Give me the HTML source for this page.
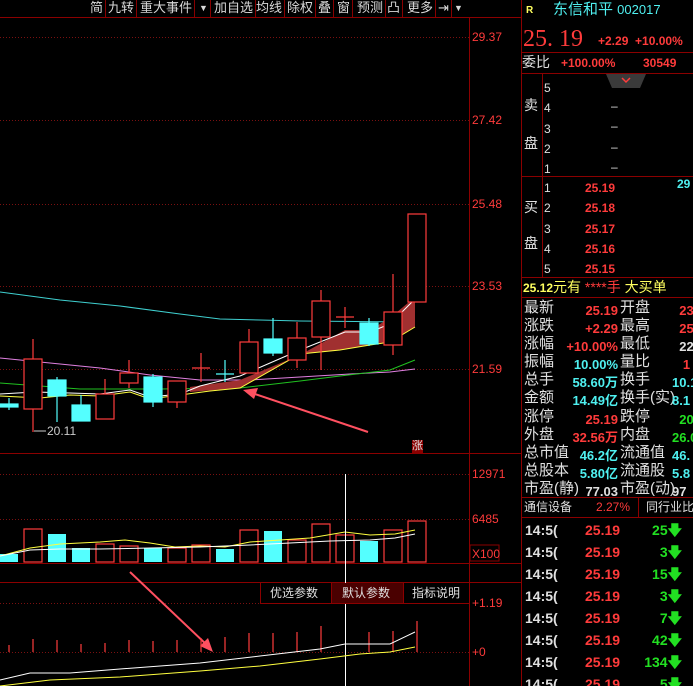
<!DOCTYPE html>
<html><head><meta charset="utf-8"><style>
*{margin:0;padding:0;box-sizing:border-box}
html,body{width:693px;height:686px;background:#000;overflow:hidden}
body{position:relative;font-family:"Liberation Sans","Noto Sans CJK SC",sans-serif;}
.t{position:absolute;white-space:nowrap;line-height:1}
.r{color:#ff3b3b}.c{color:#4ff0f0}.g{color:#22e022}.w{color:#e0e0e0}.y{color:#ffff60}
.tb{position:absolute;top:0;height:17px;font-size:13px;color:#d8d8d8;border-right:1px solid #800;line-height:16px;padding:0 2px}
</style></head><body>
<svg width="693" height="686" style="position:absolute;left:0;top:0">
<g stroke="#8b0000" stroke-width="1" fill="none">
<line x1="0" y1="17.5" x2="521" y2="17.5"/>
<line x1="469.5" y1="17" x2="469.5" y2="686"/>
<line x1="521.5" y1="0" x2="521.5" y2="686"/>
<line x1="0" y1="453.5" x2="521" y2="453.5"/>
<line x1="0" y1="563.5" x2="521" y2="563.5"/>
<line x1="0" y1="582.5" x2="521" y2="582.5"/>
</g>
<g stroke="#7a1010" stroke-dasharray="1,2" stroke-width="1">
<line x1="0" y1="37.5" x2="469" y2="37.5"/>
<line x1="0" y1="120.5" x2="469" y2="120.5"/>
<line x1="0" y1="204.5" x2="469" y2="204.5"/>
<line x1="0" y1="286.5" x2="469" y2="286.5"/>
<line x1="0" y1="369.5" x2="469" y2="369.5"/>
<line x1="0" y1="474.5" x2="469" y2="474.5"/>
<line x1="0" y1="519.5" x2="469" y2="519.5"/>
<line x1="0" y1="652.5" x2="469" y2="652.5"/>
<line x1="0" y1="603.5" x2="469" y2="603.5"/>
</g>
<polyline fill="none" stroke="#3fd0d0" points="0,292 60,300 120,306 180,314 220,319 260,320 300,321 415,322"/>
<polyline fill="none" stroke="#e080e0" points="0,358 50,363 100,368 150,375 200,380 250,380 300,377 350,374 390,372 415,369"/>
<polyline fill="none" stroke="#20c020" points="0,383 40,386 80,389 160,389 240,388 300,381 340,376 390,370 415,360"/>
<path d="M190,387 L240,380 L300,355 L345,330 L370,330 L390,318 L415,297 L415,327 L390,342 L370,345 L340,350 L300,354 L240,388 L190,392Z" fill="#a03030"/>
<polyline fill="none" stroke="#ffff40" points="0,396 40,398 70,395 100,396 130,392 150,399 180,395 210,391 240,388 300,354 340,350 370,345 390,342 415,327"/>
<polyline fill="none" stroke="#ffffff" points="0,394 35,392 70,393 100,394 130,390 150,397 180,394 200,386 240,376 270,363 300,350 345,332 370,332 390,324 415,299"/>
<g stroke="#ff3c3c" fill="#000" stroke-width="1.2">
<line x1="33" y1="339" x2="33" y2="432"/><rect x="24" y="359" width="18" height="50"/>
<line x1="105" y1="379" x2="105" y2="419"/><rect x="96" y="394" width="18" height="25"/>
<line x1="129" y1="360" x2="129" y2="388"/><rect x="120" y="373" width="18" height="10"/>
<line x1="177" y1="381" x2="177" y2="408"/><rect x="168" y="381" width="18" height="21"/>
<line x1="201" y1="353" x2="201" y2="382"/><line x1="192" y1="368" x2="210" y2="368"/>
<line x1="249" y1="329" x2="249" y2="373"/><rect x="240" y="342" width="18" height="31"/>
<line x1="297" y1="322" x2="297" y2="368"/><rect x="288" y="338" width="18" height="22"/>
<line x1="321" y1="290" x2="321" y2="370"/><rect x="312" y="301" width="18" height="36"/>
<line x1="345" y1="307" x2="345" y2="328"/><line x1="336" y1="317" x2="354" y2="317"/>
<line x1="393" y1="274" x2="393" y2="355"/><rect x="384" y="312" width="18" height="33"/>
<rect x="408" y="214" width="18" height="88"/>
</g>
<g stroke="#54ffff" fill="#54ffff" stroke-width="1.2">
<line x1="9" y1="398" x2="9" y2="410"/><rect x="0" y="404" width="18" height="3"/>
<line x1="57" y1="377" x2="57" y2="422"/><rect x="48" y="380" width="18" height="16"/>
<line x1="81" y1="395" x2="81" y2="421"/><rect x="72" y="405" width="18" height="16"/>
<line x1="153" y1="374" x2="153" y2="407"/><rect x="144" y="377" width="18" height="25"/>
<line x1="225" y1="360" x2="225" y2="382"/><line x1="216" y1="374" x2="234" y2="374"/>
<line x1="273" y1="318" x2="273" y2="356"/><rect x="264" y="339" width="18" height="14"/>
<line x1="369" y1="318" x2="369" y2="346"/><rect x="360" y="323" width="18" height="21"/>
</g>
<line x1="34" y1="431" x2="46" y2="431" stroke="#ccc"/>
<line x1="368" y1="432" x2="252" y2="393" stroke="#ff5060" stroke-width="2"/>
<polygon points="243,390 258,388 254,399" fill="#ff5060"/>
<line x1="130" y1="572" x2="208" y2="646" stroke="#ff5060" stroke-width="2"/>
<polygon points="213,652 200,646 208,638" fill="#ff5060"/>
<g fill="#54ffff">
<rect x="0" y="554" width="18" height="8"/><rect x="48" y="534" width="18" height="28"/><rect x="72" y="548" width="18" height="14"/>
<rect x="144" y="548" width="18" height="14"/><rect x="216" y="549" width="18" height="13"/><rect x="264" y="531" width="18" height="31"/><rect x="360" y="541" width="18" height="21"/>
</g>
<g fill="none" stroke="#ff3c3c" stroke-width="1.2">
<rect x="24" y="529" width="18" height="33"/><rect x="96" y="544" width="18" height="18"/><rect x="120" y="546" width="18" height="16"/>
<rect x="168" y="548" width="18" height="14"/><rect x="192" y="545" width="18" height="17"/><rect x="240" y="530" width="18" height="32"/>
<rect x="288" y="540" width="18" height="22"/><rect x="312" y="524" width="18" height="38"/><rect x="336" y="535" width="18" height="27"/>
<rect x="384" y="530" width="18" height="32"/><rect x="408" y="521" width="18" height="41"/>
</g>
<polyline fill="none" stroke="#ffff40" points="0,556 30,548 60,544 100,542 125,540 150,543 175,547 200,546 225,547 250,542 280,540 310,538 345,532 370,535 395,534 415,530"/>
<polyline fill="none" stroke="#fff" points="0,556 30,550 60,549 100,549 150,548 200,547 250,545 290,543 330,541 370,540 395,538 415,534"/>
<line x1="345.5" y1="474" x2="345.5" y2="686" stroke="#fff"/>
<g stroke="#ff3c3c" stroke-width="1.2">
<line x1="9" y1="645" x2="9" y2="652"/><line x1="33" y1="639" x2="33" y2="652"/><line x1="57" y1="640" x2="57" y2="652"/>
<line x1="81" y1="644" x2="81" y2="652"/><line x1="105" y1="643" x2="105" y2="652"/><line x1="129" y1="640" x2="129" y2="652"/>
<line x1="153" y1="641" x2="153" y2="652"/><line x1="177" y1="640" x2="177" y2="652"/><line x1="201" y1="638" x2="201" y2="652"/>
<line x1="225" y1="637" x2="225" y2="652"/><line x1="249" y1="633" x2="249" y2="652"/><line x1="273" y1="633" x2="273" y2="652"/>
<line x1="297" y1="632" x2="297" y2="652"/><line x1="321" y1="626" x2="321" y2="652"/><line x1="369" y1="632" x2="369" y2="652"/>
<line x1="393" y1="631" x2="393" y2="652"/><line x1="417" y1="621" x2="417" y2="652"/>
</g>
<polyline fill="none" stroke="#fff" points="0,680 30,673 70,673 120,669 200,663 260,656 320,649 345,644 390,644 415,632"/>
<polyline fill="none" stroke="#ffff40" points="0,686 50,680 120,677 200,671 260,666 320,659 360,654 390,652 415,647"/>
<g stroke="#8b0000">
<line x1="521" y1="52.5" x2="693" y2="52.5"/><line x1="521" y1="73.5" x2="693" y2="73.5"/>
<line x1="521" y1="176.5" x2="693" y2="176.5"/><line x1="521" y1="277.5" x2="693" y2="277.5"/>
<line x1="521" y1="297.5" x2="693" y2="297.5"/><line x1="521" y1="497.5" x2="693" y2="497.5"/>
<line x1="521" y1="517.5" x2="693" y2="517.5"/><line x1="542.5" y1="74" x2="542.5" y2="277"/>
<line x1="638.5" y1="498" x2="638.5" y2="517"/>
</g>
<polygon points="606,74 646,74 640,88 612,88" fill="#3a3a3a"/>
<polyline points="622,78 626,82 630,78" fill="none" stroke="#ff3c3c" stroke-width="1.5"/>
<rect x="412" y="440" width="11" height="13" fill="#8b0000"/>
<rect x="331" y="583" width="72" height="20" fill="#4a0000"/>
<g stroke="#8b0000"><line x1="260.5" y1="583" x2="260.5" y2="603"/><line x1="331.5" y1="583" x2="331.5" y2="603"/><line x1="403.5" y1="583" x2="403.5" y2="603"/><line x1="260" y1="603.5" x2="469" y2="603.5"/></g>
<rect x="470" y="545" width="29" height="16" fill="none" stroke="#8b0000"/>
</svg>

<div class="tb" style="left:88px">简</div><div class="tb" style="left:106px">九转</div><div class="tb" style="left:138px">重大事件</div>
<div class="tb" style="left:197px;font-size:9px">▼</div><div class="tb" style="left:212px">加自选</div><div class="tb" style="left:254px">均线</div>
<div class="tb" style="left:285px">除权</div><div class="tb" style="left:316px">叠</div><div class="tb" style="left:335px">窗</div><div class="tb" style="left:355px">预测</div>
<div class="tb" style="left:385px">凸</div><div class="tb" style="left:405px">更多</div><div class="tb" style="left:436px">⇥</div><div class="tb" style="left:452px;font-size:9px;border:none">▼</div>

<div class="t r" style="left:472px;top:31px;font-size:12px">29.37</div>
<div class="t r" style="left:472px;top:114px;font-size:12px">27.42</div>
<div class="t r" style="left:472px;top:198px;font-size:12px">25.48</div>
<div class="t r" style="left:472px;top:280px;font-size:12px">23.53</div>
<div class="t r" style="left:472px;top:363px;font-size:12px">21.59</div>
<div class="t w" style="left:47px;top:425px;font-size:12px;color:#ccc">20.11</div>
<div class="t w" style="left:412px;top:441px;font-size:11px">涨</div>
<div class="t r" style="left:472px;top:468px;font-size:12px">12971</div>
<div class="t r" style="left:472px;top:513px;font-size:12px">6485</div>
<div class="t r" style="left:472px;top:548px;font-size:12px">X100</div>
<div class="t r" style="left:472px;top:597px;font-size:12px">+1.19</div>
<div class="t r" style="left:472px;top:646px;font-size:12px">+0</div>
<div class="t w" style="left:270px;top:587px;font-size:12px">优选参数</div>
<div class="t w" style="left:342px;top:587px;font-size:12px">默认参数</div>
<div class="t w" style="left:412px;top:587px;font-size:12px">指标说明</div>

<div class="t y" style="left:526px;top:6px;font-size:10px;font-weight:bold">R</div>
<div class="t c" style="left:553px;top:2px;font-size:15px">东信和平 <span style="font-size:13px">002017</span></div>
<div class="t r" style="left:523px;top:27px;font-size:24px;font-family:'Liberation Serif','Noto Serif CJK SC',serif">25. 19</div>
<div class="t r" style="left:598px;top:35px;font-size:12px;font-weight:bold">+2.29 &nbsp;+10.00%</div>
<div class="t w" style="left:522px;top:55px;font-size:14px">委比</div>
<div class="t r" style="left:561px;top:57px;font-size:12px;font-weight:bold">+100.00%</div>
<div class="t r" style="left:643px;top:57px;font-size:12px;font-weight:bold">30549</div>
<div class="t w" style="left:524px;top:98px;font-size:14px">卖</div><div class="t w" style="left:524px;top:136px;font-size:14px">盘</div>
<div class="t w" style="left:524px;top:200px;font-size:14px">买</div><div class="t w" style="left:524px;top:236px;font-size:14px">盘</div>
<div class="t w" style="left:544px;top:78px;font-size:12px;line-height:20.3px">5<br>4<br>3<br>2<br>1</div>
<div class="t w" style="left:611px;top:96px;font-size:12px;line-height:20.3px">–<br>–<br>–<br>–</div>
<div class="t w" style="left:544px;top:178px;font-size:12px;line-height:20.3px">1<br>2<br>3<br>4<br>5</div>
<div class="t r" style="left:585px;top:178px;font-size:12px;font-weight:bold;line-height:20.3px">25.19<br>25.18<br>25.17<br>25.16<br>25.15</div>
<div class="t c" style="left:677px;top:178px;font-size:12px;font-weight:bold">29</div>
<div class="t y" style="left:523px;top:280px;font-size:14px"><b style="font-size:12px">25.12</b>元有 <span class="r">****手</span> 大买单</div>
<div class="t w" style="left:524px;top:299px;font-size:15px;line-height:18.1px">最新<br>涨跌<br>涨幅<br>振幅<br>总手<br>金额<br>涨停<br>外盘<br>总市值<br>总股本<br>市盈(静)</div>
<div class="t" style="left:558px;top:302px;font-size:13px;font-weight:bold;line-height:18.1px;text-align:right;width:60px"><span class="r">25.19</span><br><span class="r">+2.29</span><br><span class="r">+10.00%</span><br><span class="c">10.00%</span><br><span class="c">58.60万</span><br><span class="c">14.49亿</span><br><span class="r">25.19</span><br><span class="r">32.56万</span><br><span class="c">46.2亿</span><br><span class="c">5.80亿</span><br><span class="w">77.03</span></div>
<div class="t w" style="left:620px;top:299px;font-size:15px;line-height:18.1px">开盘<br>最高<br>最低<br>量比<br>换手<br>换手(实)<br>跌停<br>内盘<br>流通值<br>流通股<br>市盈(动)</div>
<div class="t" style="left:672px;top:302px;font-size:13px;font-weight:bold;line-height:18.1px"><span class="r">&nbsp;&nbsp;23</span><br><span class="r">&nbsp;&nbsp;25</span><br><span class="w">&nbsp;&nbsp;22</span><br><span class="r">&nbsp;&nbsp;&nbsp;1</span><br><span class="c">10.1</span><br><span class="c">8.1</span><br><span class="g">&nbsp;&nbsp;20</span><br><span class="g">26.0</span><br><span class="c">46.</span><br><span class="c">5.8</span><br><span class="w">97</span></div>
<div class="t w" style="left:524px;top:501px;font-size:12px">通信设备</div>
<div class="t r" style="left:596px;top:501px;font-size:12px">2.27%</div>
<div class="t w" style="left:646px;top:501px;font-size:12px">同行业比</div>
<div class="t w" style="left:525px;top:519px;font-size:14px;font-weight:bold;line-height:22px">14:5(<br>14:5(<br>14:5(<br>14:5(<br>14:5(<br>14:5(<br>14:5(<br>14:5(</div>
<div class="t r" style="left:585px;top:519px;font-size:14px;font-weight:bold;line-height:22px">25.19<br>25.19<br>25.19<br>25.19<br>25.19<br>25.19<br>25.19<br>25.19</div>
<div class="t g" style="left:636px;top:519px;width:46px;text-align:right;font-size:14px;font-weight:bold;line-height:22px">25🡇<br>3🡇<br>15🡇<br>3🡇<br>7🡇<br>42🡇<br>134🡇<br>5🡇</div>
</body></html>
